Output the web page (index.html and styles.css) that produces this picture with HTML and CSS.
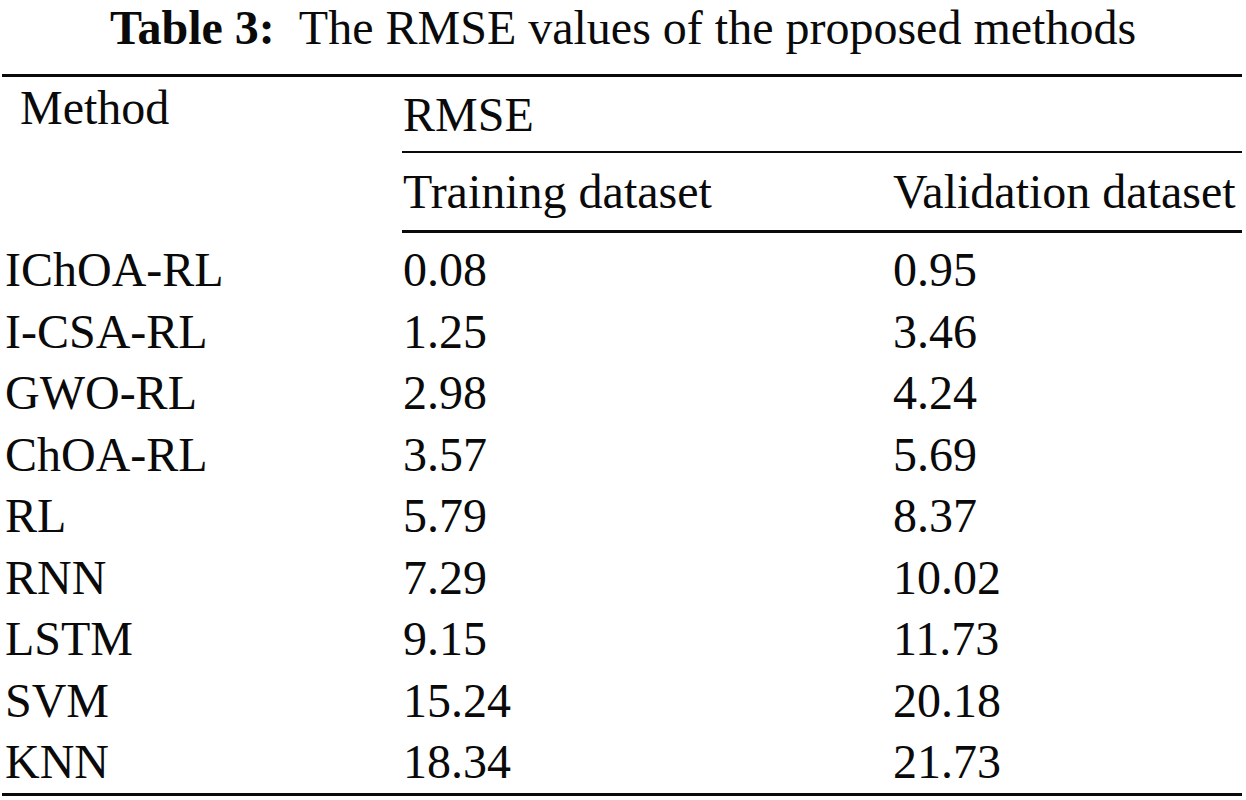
FILE: index.html
```html
<!DOCTYPE html>
<html lang="en">
<head>
<meta charset="utf-8">
<title>Table 3</title>
<link rel="stylesheet" href="styles.css">
</head>
<body>
<div class="page">
  <h1 class="caption"><span class="label">Table 3:</span>The RMSE values of the proposed methods</h1>
  <table class="data">
    <colgroup>
      <col class="c1">
      <col class="c2">
      <col class="c3">
    </colgroup>
    <thead>
      <tr class="h1">
        <th class="method" rowspan="2">Method</th>
        <th class="group" colspan="2">RMSE</th>
      </tr>
      <tr class="h2">
        <th class="sub first">Training dataset</th>
        <th class="sub">Validation dataset</th>
      </tr>
    </thead>
    <tbody>
      <tr><td>IChOA-RL</td><td class="v2">0.08</td><td>0.95</td></tr>
      <tr><td>I-CSA-RL</td><td class="v2">1.25</td><td>3.46</td></tr>
      <tr><td>GWO-RL</td><td class="v2">2.98</td><td>4.24</td></tr>
      <tr><td>ChOA-RL</td><td class="v2">3.57</td><td>5.69</td></tr>
      <tr><td>RL</td><td class="v2">5.79</td><td>8.37</td></tr>
      <tr><td>RNN</td><td class="v2">7.29</td><td>10.02</td></tr>
      <tr><td>LSTM</td><td class="v2">9.15</td><td>11.73</td></tr>
      <tr><td>SVM</td><td class="v2">15.24</td><td>20.18</td></tr>
      <tr><td>KNN</td><td class="v2">18.34</td><td>21.73</td></tr>
    </tbody>
  </table>
</div>
</body>
</html>
```

FILE: styles.css
```css
html, body {
  margin: 0;
  padding: 0;
  background: #ffffff;
}

.page {
  width: 1246px;
  font-family: "Liberation Serif", "Times New Roman", serif;
  font-size: 48px;
  color: #0a0a0a;
}

.caption {
  margin: 0;
  font-size: 48px;
  font-weight: normal;
  line-height: 55px;
  text-align: center;
}

.caption .label {
  font-weight: bold;
  margin-right: 24px;
}

.data {
  margin: 19px 0 0 2px;
  width: 1240px;
  border-collapse: collapse;
  table-layout: fixed;
  border-top: 3px solid #0a0a0a;
  border-bottom: 3px solid #0a0a0a;
}

.c1 { width: 400px; }
.c2 { width: 488px; }
.c3 { width: 352px; }

.data th,
.data td {
  padding: 0 0 0 3px;
  font-weight: normal;
  text-align: left;
  line-height: 55px;
  white-space: nowrap;
}

.data .h1 th {
  height: 74px;
  vertical-align: middle;
}

.data .h1 th.method {
  vertical-align: top;
  padding-top: 3px;
  padding-left: 18px;
}

.data .h1 th.group {
  padding-left: 1px;
  border-bottom: 2px solid #0a0a0a;
}

.data .h2 th {
  height: 77px;
  vertical-align: middle;
  border-bottom: 3px solid #0a0a0a;
}

.data .h2 th.first {
  padding-left: 1px;
}

.data tbody td {
  height: 61.5px;
  vertical-align: middle;
}

.data tbody tr:first-child td {
  padding-top: 6px;
}

.data tbody td.v2 {
  padding-left: 1px;
}
```
